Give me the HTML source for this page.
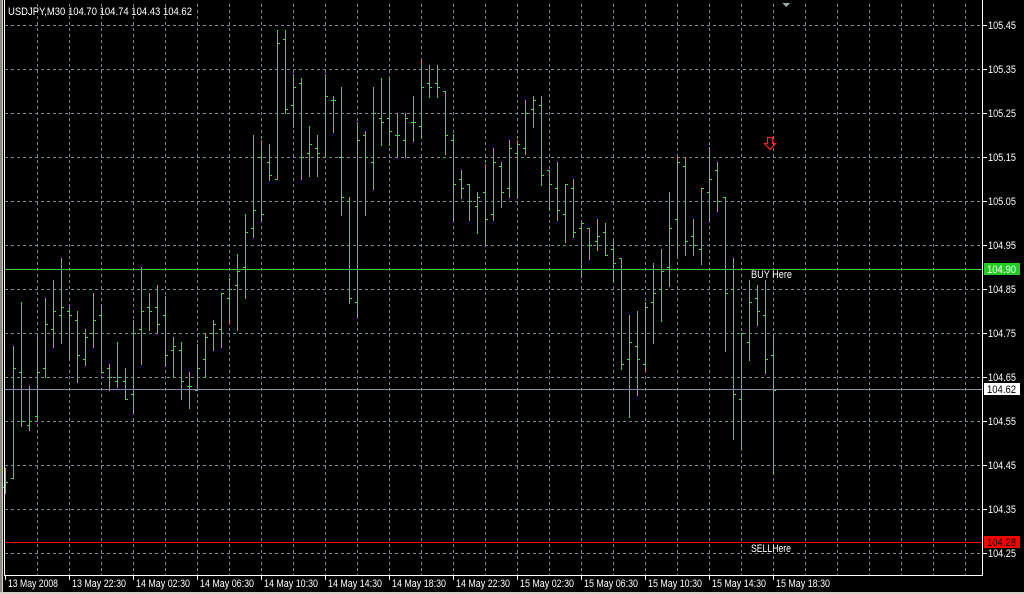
<!DOCTYPE html>
<html><head><meta charset="utf-8"><style>
html,body{margin:0;padding:0;background:#000;width:1024px;height:594px;overflow:hidden}
svg{display:block}
text{font-family:"Liberation Sans",sans-serif;font-size:11px}
</style></head><body>
<svg id="c" width="1024" height="594" xmlns="http://www.w3.org/2000/svg" shape-rendering="crispEdges">
<rect x="0" y="0" width="1024" height="594" fill="#000"/>
<rect x="0" y="0" width="2" height="594" fill="#8a877f"/>
<rect x="2" y="0" width="1" height="594" fill="#d4d0c8"/>
<rect x="0" y="592" width="1024" height="2" fill="#d4d0c8"/>
<g id="grid" stroke="#778899" stroke-width="1" stroke-dasharray="3,3"></g>
<g id="bars" stroke="#22ee22" stroke-width="1"></g>
<line x1="5" y1="269.5" x2="982" y2="269.5" stroke="#3cc83c"/>
<line x1="5" y1="389.5" x2="982" y2="389.5" stroke="#8090a0"/>
<line x1="5" y1="542.5" x2="982" y2="542.5" stroke="#ff0000"/>
<line x1="4.5" y1="0" x2="4.5" y2="576" stroke="#fff"/>
<line x1="982.5" y1="0" x2="982.5" y2="576" stroke="#fff"/>
<line x1="4" y1="575.5" x2="983" y2="575.5" stroke="#fff"/>
<polygon points="782,3 790,3 786,7" fill="#9aa"/>
<g id="axis" fill="#fff"></g>
<text x="8" y="15" fill="#fff" textLength="184" lengthAdjust="spacingAndGlyphs">USDJPY,M30  104.70 104.74 104.43 104.62</text>
<text x="751" y="278" fill="#fff" font-size="10" textLength="41" lengthAdjust="spacingAndGlyphs">BUY Here</text>
<text x="751" y="552" fill="#fff" font-size="10" textLength="40" lengthAdjust="spacingAndGlyphs">SELLHere</text>
<polygon points="767.5,137.5 772.5,137.5 772.5,143.5 775.5,143.5 770,149.5 764.5,143.5 767.5,143.5" fill="none" stroke="#ff2020" stroke-width="1.2" shape-rendering="auto"/>
<rect x="984" y="263" width="36" height="12" fill="#22cc22"/>
<text x="987" y="273" fill="#fff" textLength="29" lengthAdjust="spacingAndGlyphs">104.90</text>
<rect x="984" y="383" width="36" height="12" fill="#fff"/>
<text x="987" y="393" fill="#000" textLength="29" lengthAdjust="spacingAndGlyphs">104.62</text>
<rect x="984" y="536" width="36" height="12" fill="#ff0000"/>
<text x="987" y="546" fill="#000" textLength="29" lengthAdjust="spacingAndGlyphs">104.28</text>
</svg>
<script>
var NS="http://www.w3.org/2000/svg";
function el(p,t,a,txt){var e=document.createElementNS(NS,t);for(var k in a)e.setAttribute(k,a[k]);if(txt)e.textContent=txt;p.appendChild(e);return e;}
var g=document.getElementById('grid');
for(var n=0;n<=12;n++){var y=25+44*n+0.5;el(g,'line',{x1:5,y1:y,x2:982,y2:y});}
for(var x=37;x<=965;x+=32){el(g,'line',{x1:x+0.5,y1:4,x2:x+0.5,y2:575});}
var ax=document.getElementById('axis');
var prices=["105.45","105.35","105.25","105.15","105.05","104.95","104.85","104.75","104.65","104.55","104.45","104.35","104.25"];
for(var n=0;n<13;n++){var y=25+44*n;
 el(ax,'rect',{x:983,y:y,width:4,height:1});
 el(ax,'text',{x:988,y:y+4,textLength:28,lengthAdjust:'spacingAndGlyphs'},prices[n]);}
var times=["13 May 2008","13 May 22:30","14 May 02:30","14 May 06:30","14 May 10:30","14 May 14:30","14 May 18:30","14 May 22:30","15 May 02:30","15 May 06:30","15 May 10:30","15 May 14:30","15 May 18:30"];
for(var i=0;i<13;i++){var x=5+64*i;el(ax,'rect',{x:x,y:576,width:1,height:4});el(ax,'text',{x:x+3,y:587,'font-size':'10',textLength:(i==0?50:54),lengthAdjust:'spacingAndGlyphs'},times[i]);}
var d=[
[1345,1420,1400,1387],[978,1375,1375,1045],[846,1217,1056,1203],[1098,1231,1215,1203],[950,1203,1189,1056],
[834,1071,1045,912],[780,980,928,873],[714,968,886,861],[861,1015,873,886],[873,1085,900,1006],
[927,1034,1018,952],[819,980,940,900],[861,1059,886,1056],[1032,1111,1045,1071],[966,1100,1084,1071],
[1044,1138,1084,1138],[900,1177,1123,940],[741,1033,928,873],[819,929,861,873],[795,940,861,912],
[829,1034,886,1006],[951,1071,991,978],[966,1138,991,1083],[1056,1165,1098,1098],[973,1111,1110,1045],
[940,1071,1018,952],[900,991,940,912],[819,980,928,819],[775,907,834,806],[702,929,795,754],
[582,835,742,636],[345,650,624,570],
[360,600,412,582],[372,480,427,466],[30,478,478,70],[30,280,58,268],[162,320,256,202],[174,478,190,412],
[318,467,400,373],[345,467,385,400],[162,412,412,229],[229,335,241,241],[201,584,412,532],[532,848,544,834],
[306,889,847,361],[333,584,346,412],[201,507,427,280],[174,374,295,307],[174,374,295,334],[280,412,346,346],
[280,412,361,295],[228,362,307,307],[123,350,319,202],[135,230,190,202],[135,230,190,202],[214,401,214,346],
[343,601,361,493],[450,533,478,505],[492,600,493,544],[517,638,559,532],[433,676,517,598],[384,600,583,427],
[426,560,439,517],[360,532,505,385],[360,532,400,373],
[240,401,384,280],[228,320,268,241],[228,494,256,466],[451,566,451,493],[426,600,505,571],[492,665,583,493],
[478,650,505,637],[609,770,625,609],[625,716,625,676],[598,689,664,649],[609,704,637,704],[663,782,688,730],
[715,1046,715,1032],[885,1190,1018,967],[873,1124,979,1018],[846,1051,1032,861],[729,968,847,820],[688,902,806,754],
[516,797,742,625],[412,705,598,427],[412,705,439,664],[598,704,649,676],[505,731,688,505],[381,601,517,478],
[426,572,451,544],[531,992,532,820],[714,1256,808,1123],[940,1285,1138,940],[780,1019,967,847],[796,914,834,874],
[780,1058,886,1018],[950,1360,1005,1110]];
var b=document.getElementById('bars');
function Y(z){return Math.round(20+z/3);}
for(var i=0;i<d.length;i++){var x=5+8*i+0.5,r=d[i];
 var hi=Y(r[0]),lo=Y(r[1]);if(lo>574)lo=574;
 el(b,'line',{x1:x,y1:hi,x2:x,y2:lo+1});
 var o=Y(r[2])+0.5,c=Y(r[3])+0.5;
 el(b,'line',{x1:x-2.5,y1:o,x2:x,y2:o});
 el(b,'line',{x1:x,y1:c,x2:x+2.5,y2:c});}
</script>
</body></html>
